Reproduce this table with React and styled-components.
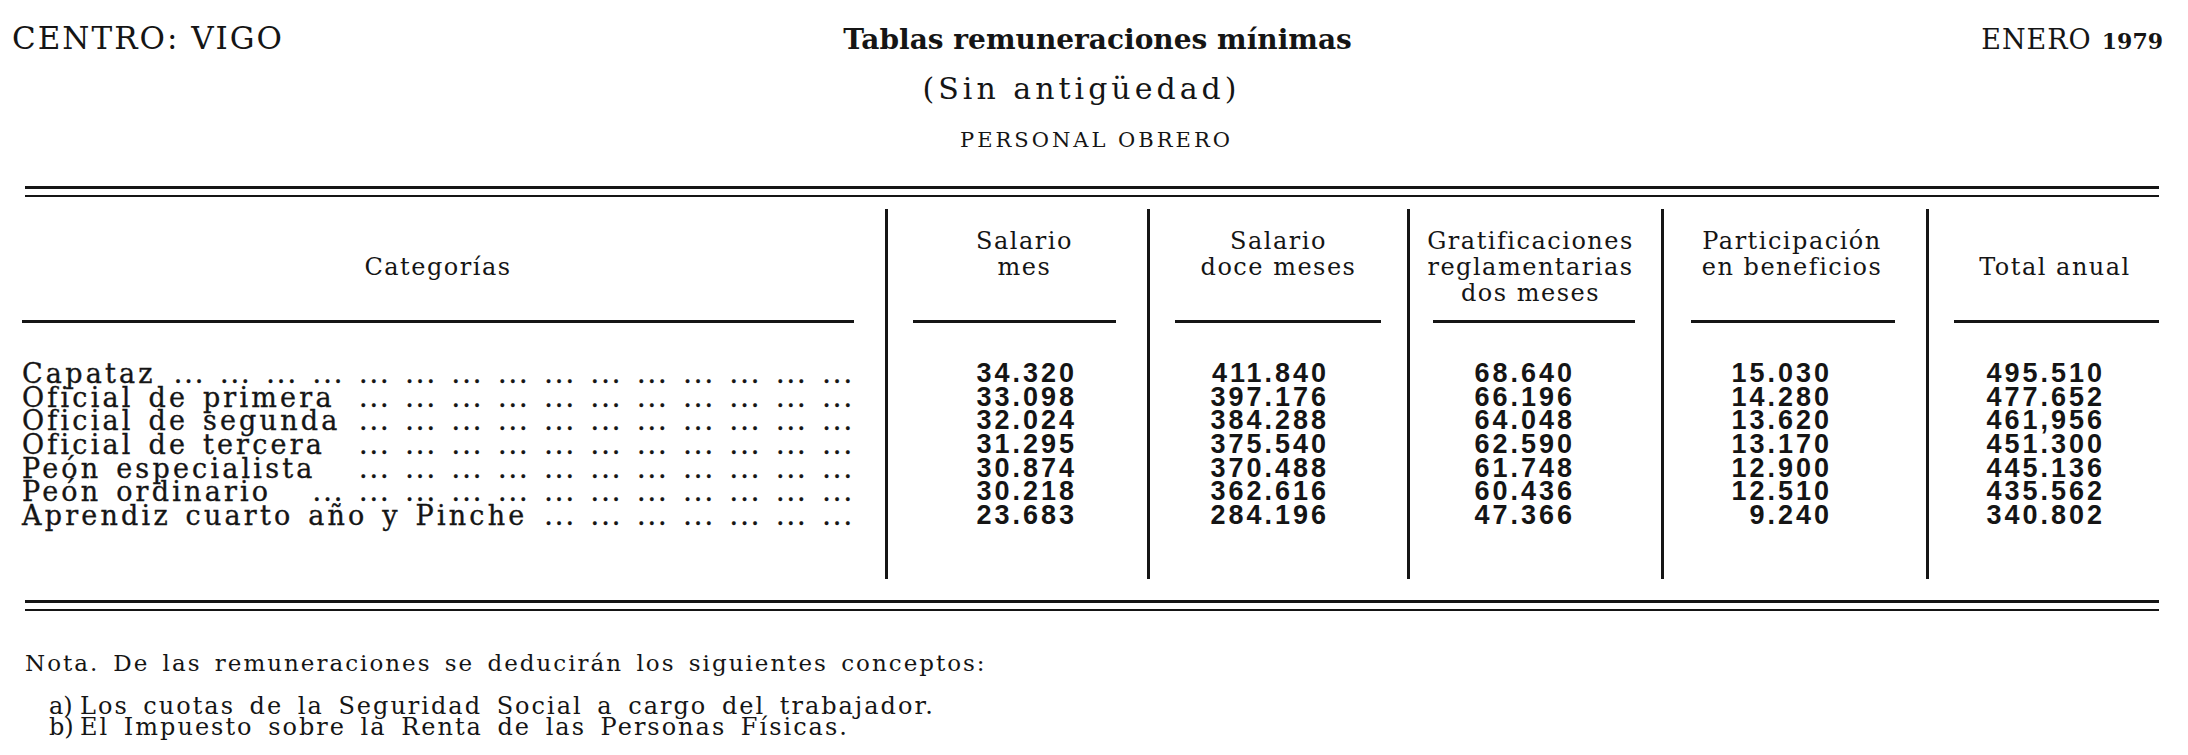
import React, { useLayoutEffect, useRef, useState } from "react";
import styled, { createGlobalStyle } from "styled-components";

const Global = createGlobalStyle`
  html, body { margin: 0; padding: 0; background: #ffffff; }
  body {
    width: 2188px;
    height: 755px;
    overflow: hidden;
    color: #151515;
    font-family: "DejaVu Serif", "Liberation Serif", serif;
  }
`;

const INK = "#151515";
const LABEL_SIZE = 27;
const LEADER_LS = 2;
const LEADER_WS = 4;

const Page = styled.div`
  width: 2188px;
  box-sizing: border-box;
  padding: 22px 29px 0 22px;
`;

const TopBar = styled.header`
  display: grid;
  grid-template-columns: 1fr auto 1fr;
  align-items: baseline;
  margin: 0 -4px 0 -10px;
  line-height: 32px;
  height: 32px;
`;

const Centro = styled.div`
  font-size: 31px;
  letter-spacing: 2px;
`;

const Title = styled.h1`
  margin: 0 0 0 20px;
  font-size: 28px;
  font-weight: bold;
  line-height: 32px;
`;

const Fecha = styled.div`
  justify-self: end;
  font-size: 27px;
  letter-spacing: 1px;
`;

const Year = styled.span`
  font-size: 22px;
  font-weight: bold;
  margin-left: 10px;
  letter-spacing: 0;
`;

const Subtitle = styled.div`
  margin-top: 19px;
  padding-right: 18px;
  text-align: center;
  font-size: 30px;
  letter-spacing: 4px;
  line-height: 32px;
`;

const Section = styled.div`
  margin-top: 20px;
  padding-left: 12px;
  text-align: center;
  font-size: 21px;
  letter-spacing: 3px;
  line-height: 30px;
`;

const DoubleRule = styled.div`
  margin: ${(p) => p.$top}px 0 0 3px;
  height: 6px;
  border-top: 3px solid ${INK};
  border-bottom: 2px solid ${INK};
`;

const Table = styled.div`
  display: grid;
  grid-template-columns: 863px 262px 260px 254px 265px 233px;
  padding-top: 12px;
`;

const Column = styled.div`
  display: flex;
  flex-direction: column;
  border-left: ${(p) => (p.$first ? "none" : `3px solid ${INK}`)};
  padding-bottom: 51px;
`;

const HeaderCell = styled.div`
  height: 111px;
  box-sizing: border-box;
  padding: 19px ${(p) => p.$pr || 0}px 14px ${(p) => p.$pl || 0}px;
  display: flex;
  flex-direction: column;
  justify-content: ${(p) => (p.$center ? "center" : "flex-start")};
  text-align: center;
  font-size: 24px;
  letter-spacing: 1.5px;
  line-height: 26px;
  white-space: nowrap;
`;

const Underline = styled.div`
  height: 3px;
  background: ${INK};
  margin: 0 ${(p) => p.$r}px 0 ${(p) => p.$l}px;
`;

const Body = styled.div`
  padding-top: 39px;
`;

const LabelRowBox = styled.div`
  display: flex;
  white-space: nowrap;
  padding-right: 31px;
  font-size: ${LABEL_SIZE}px;
  line-height: 23.67px;
  height: 23.67px;
  -webkit-text-stroke: 0.35px ${INK};
`;

const Label = styled.span`
  flex: none;
  padding-right: 8px;
  letter-spacing: 3.2px;
  word-spacing: 3px;
`;

const Leader = styled.span`
  flex: 1;
  min-width: 0;
  text-align: right;
  letter-spacing: ${LEADER_LS}px;
  word-spacing: ${LEADER_WS}px;
`;

const NumCell = styled.div`
  text-align: right;
  padding-right: ${(p) => p.$pr}px;
  font-family: "Liberation Sans", Arial, sans-serif;
  font-weight: bold;
  font-size: 27px;
  letter-spacing: 3px;
  line-height: 23.67px;
  height: 23.67px;
`;

const Note = styled.div`
  margin-top: 39px;
  padding-left: 3px;
  letter-spacing: 2px;
`;

const NoteLine = styled.div`
  font-size: 23px;
  word-spacing: 4px;
  line-height: 26px;
  margin-bottom: 20px;
`;

const NoteLead = styled.span`
  margin-right: 14px;
`;

const Item = styled.div`
  display: flex;
  padding-left: 24px;
  font-size: 24px;
  word-spacing: 5px;
  line-height: 21px;
`;

const Marker = styled.span`
  flex: none;
  width: 31px;
  letter-spacing: 0;
`;

let measureCtx = null;
function groupPitch() {
  if (!measureCtx) {
    measureCtx = document.createElement("canvas").getContext("2d");
  }
  measureCtx.font = `${LABEL_SIZE}px "DejaVu Serif"`;
  const dots = measureCtx.measureText("...").width + 3 * LEADER_LS;
  const space = measureCtx.measureText(" ").width + LEADER_LS + LEADER_WS;
  return { dots, space };
}

function LabelRow({ label }) {
  const leaderRef = useRef(null);
  const [count, setCount] = useState(0);

  useLayoutEffect(() => {
    const el = leaderRef.current;
    if (!el) return;
    const avail = el.clientWidth - 8;
    const { dots, space } = groupPitch();
    setCount(Math.max(0, Math.floor((avail + space) / (dots + space))));
  }, []);

  return (
    <LabelRowBox>
      <Label>{label}</Label>
      <Leader ref={leaderRef}>{Array(count).fill("...").join(" ")}</Leader>
    </LabelRowBox>
  );
}

const rows = [
  "Capataz",
  "Oficial de primera",
  "Oficial de segunda",
  "Oficial de tercera",
  "Peón especialista",
  "Peón ordinario",
  "Aprendiz cuarto año y Pinche",
];

const columns = [
  {
    head: ["Salario", "mes"],
    pl: 14,
    pr: 0,
    ul: [25, 31],
    numPr: 70,
    values: ["34.320", "33.098", "32.024", "31.295", "30.874", "30.218", "23.683"],
  },
  {
    head: ["Salario", "doce meses"],
    pl: 0,
    pr: 0,
    ul: [25, 26],
    numPr: 78,
    values: ["411.840", "397.176", "384.288", "375.540", "370.488", "362.616", "284.196"],
  },
  {
    head: ["Gratificaciones", "reglamentarias", "dos meses"],
    pl: 0,
    pr: 10,
    ul: [23, 26],
    numPr: 86,
    values: ["68.640", "66.196", "64.048", "62.590", "61.748", "60.436", "47.366"],
  },
  {
    head: ["Participación", "en beneficios"],
    pl: 0,
    pr: 6,
    ul: [27, 31],
    numPr: 94,
    values: ["15.030", "14.280", "13.620", "13.170", "12.900", "12.510", "9.240"],
  },
  {
    head: ["Total anual"],
    center: true,
    pl: 22,
    pr: 0,
    ul: [25, 0],
    numPr: 54,
    values: ["495.510", "477.652", "461,956", "451.300", "445.136", "435.562", "340.802"],
  },
];

export default function App() {
  return (
    <>
      <Global />
      <Page>
        <TopBar>
          <Centro>CENTRO: VIGO</Centro>
          <Title>Tablas remuneraciones mínimas</Title>
          <Fecha>
            ENERO<Year>1979</Year>
          </Fecha>
        </TopBar>
        <Subtitle>(Sin antigüedad)</Subtitle>
        <Section>PERSONAL OBRERO</Section>
        <DoubleRule $top={31} />
        <Table>
          <Column $first>
            <HeaderCell $center $pr={31}>
              <div>Categorías</div>
            </HeaderCell>
            <Underline $l={0} $r={31} />
            <Body>
              {rows.map((r) => (
                <LabelRow key={r} label={r} />
              ))}
            </Body>
          </Column>
          {columns.map((c, i) => (
            <Column key={i}>
              <HeaderCell $center={c.center} $pl={c.pl} $pr={c.pr}>
                {c.head.map((h) => (
                  <div key={h}>{h}</div>
                ))}
              </HeaderCell>
              <Underline $l={c.ul[0]} $r={c.ul[1]} />
              <Body>
                {c.values.map((v, j) => (
                  <NumCell key={j} $pr={c.numPr}>
                    {v}
                  </NumCell>
                ))}
              </Body>
            </Column>
          ))}
        </Table>
        <DoubleRule $top={21} />
        <Note>
          <NoteLine>
            <NoteLead>Nota.</NoteLead>De las remuneraciones se deducirán los siguientes conceptos:
          </NoteLine>
          <Item>
            <Marker>a)</Marker>
            <span>Los cuotas de la Seguridad Social a cargo del trabajador.</span>
          </Item>
          <Item>
            <Marker>b)</Marker>
            <span>El Impuesto sobre la Renta de las Personas Físicas.</span>
          </Item>
        </Note>
      </Page>
    </>
  );
}
